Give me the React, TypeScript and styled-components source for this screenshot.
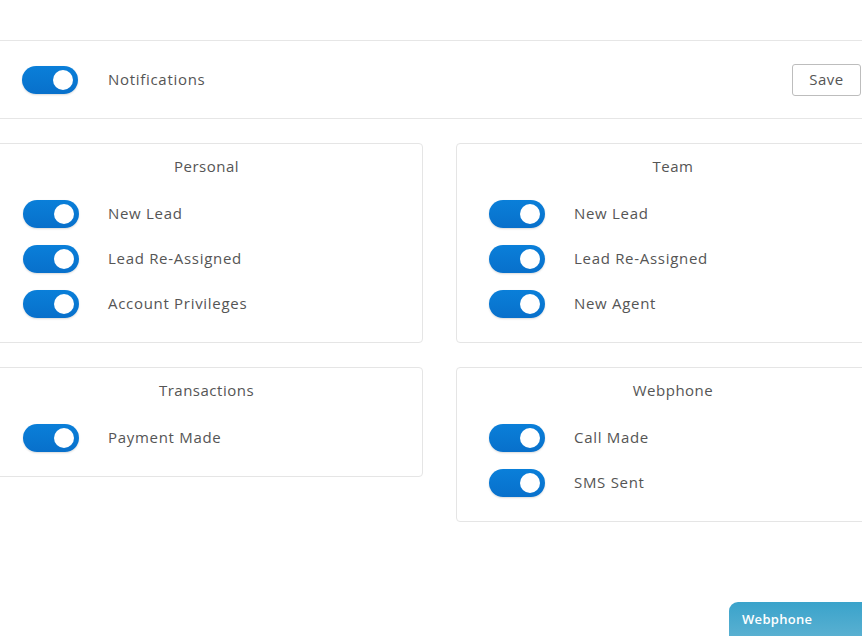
import React from "react";
import styled, { createGlobalStyle } from "styled-components";

const Global = createGlobalStyle`
  html, body { margin: 0; padding: 0; background: #fff; overflow: hidden; }
  body { font-family: "Open Sans", "Liberation Sans", sans-serif; color: #555; }
  #root { width: 862px; height: 636px; position: relative; overflow: hidden; }
`;

const Page = styled.div`
  padding-top: 40px;
`;

const TopBar = styled.div`
  display: flex;
  align-items: center;
  justify-content: space-between;
  height: 77px;
  border-top: 1px solid #e6e6e6;
  border-bottom: 1px solid #e6e6e6;
  padding: 0 1px 0 22px;
`;

const Left = styled.div`
  display: flex;
  align-items: center;
  & > span { margin-left: 30px; }
`;

const SaveButton = styled.button`
  width: 69px;
  height: 32px;
  border: 1px solid #bdbdbd;
  border-radius: 3px;
  background: #fff;
  color: #555;
  font-family: inherit;
  font-size: 15px;
  letter-spacing: 0.5px;
  padding: 0 0 1px;
  cursor: pointer;
`;

const Grid = styled.div`
  width: 900px;
  margin: 24px 0 0 -10px;
  display: grid;
  grid-template-columns: 433px 434px;
  column-gap: 33px;
  row-gap: 24px;
  align-items: start;
`;

const Card = styled.div`
  border: 1px solid #e5e5e5;
  border-radius: 4px;
  padding: 11px 0 24px 32px;
`;

const CardTitle = styled.div`
  text-align: center;
  font-size: 15px;
  line-height: 22px;
  letter-spacing: 0.5px;
  padding-right: 32px;
  margin-bottom: 23px;
`;

const Rows = styled.div`
  display: flex;
  flex-direction: column;
  gap: 17px;
`;

const Row = styled.div`
  display: flex;
  align-items: center;
`;

const Track = styled.div<{ $on: boolean }>`
  width: 56px;
  height: 28px;
  border-radius: 14px;
  flex: none;
  position: relative;
  background: ${(p) => (p.$on ? "linear-gradient(#0a7fd9, #0870cb)" : "#ccc")};
  box-shadow: 0 1px 2px rgba(0, 0, 0, 0.15);
`;

const Knob = styled.div<{ $on: boolean }>`
  position: absolute;
  top: 4px;
  ${(p) => (p.$on ? "right: 5px;" : "left: 5px;")}
  width: 20px;
  height: 20px;
  border-radius: 50%;
  background: #fff;
`;

const Label = styled.span`
  margin-left: 29px;
  padding-bottom: 2px;
  font-size: 15px;
  line-height: 20px;
  color: #555;
  letter-spacing: 0.7px;
`;

const WebphoneTab = styled.div`
  position: absolute;
  left: 729px;
  top: 602px;
  width: 140px;
  height: 40px;
  border-radius: 9px 0 0 0;
  background: linear-gradient(#3aa3cb, #5eb2d2);
  color: #fff;
  font-weight: 600;
  font-size: 13px;
  letter-spacing: 0.3px;
  padding: 8px 0 0 13px;
  box-sizing: border-box;
  font-family: "Open Sans", sans-serif;
`;

const Toggle = ({ on = true }: { on?: boolean }) => (
  <Track $on={on}>
    <Knob $on={on} />
  </Track>
);

const sections: { title: string; items: string[] }[] = [
  { title: "Personal", items: ["New Lead", "Lead Re-Assigned", "Account Privileges"] },
  { title: "Team", items: ["New Lead", "Lead Re-Assigned", "New Agent"] },
  { title: "Transactions", items: ["Payment Made"] },
  { title: "Webphone", items: ["Call Made", "SMS Sent"] },
];

export default function App() {
  return (
    <>
      <Global />
      <Page>
        <TopBar>
          <Left>
            <Toggle />
            <Label>Notifications</Label>
          </Left>
          <SaveButton>Save</SaveButton>
        </TopBar>
        <Grid>
          {sections.map((s) => (
            <Card key={s.title}>
              <CardTitle>{s.title}</CardTitle>
              <Rows>
                {s.items.map((it) => (
                  <Row key={it}>
                    <Toggle />
                    <Label>{it}</Label>
                  </Row>
                ))}
              </Rows>
            </Card>
          ))}
        </Grid>
      </Page>
      <WebphoneTab>Webphone</WebphoneTab>
    </>
  );
}
